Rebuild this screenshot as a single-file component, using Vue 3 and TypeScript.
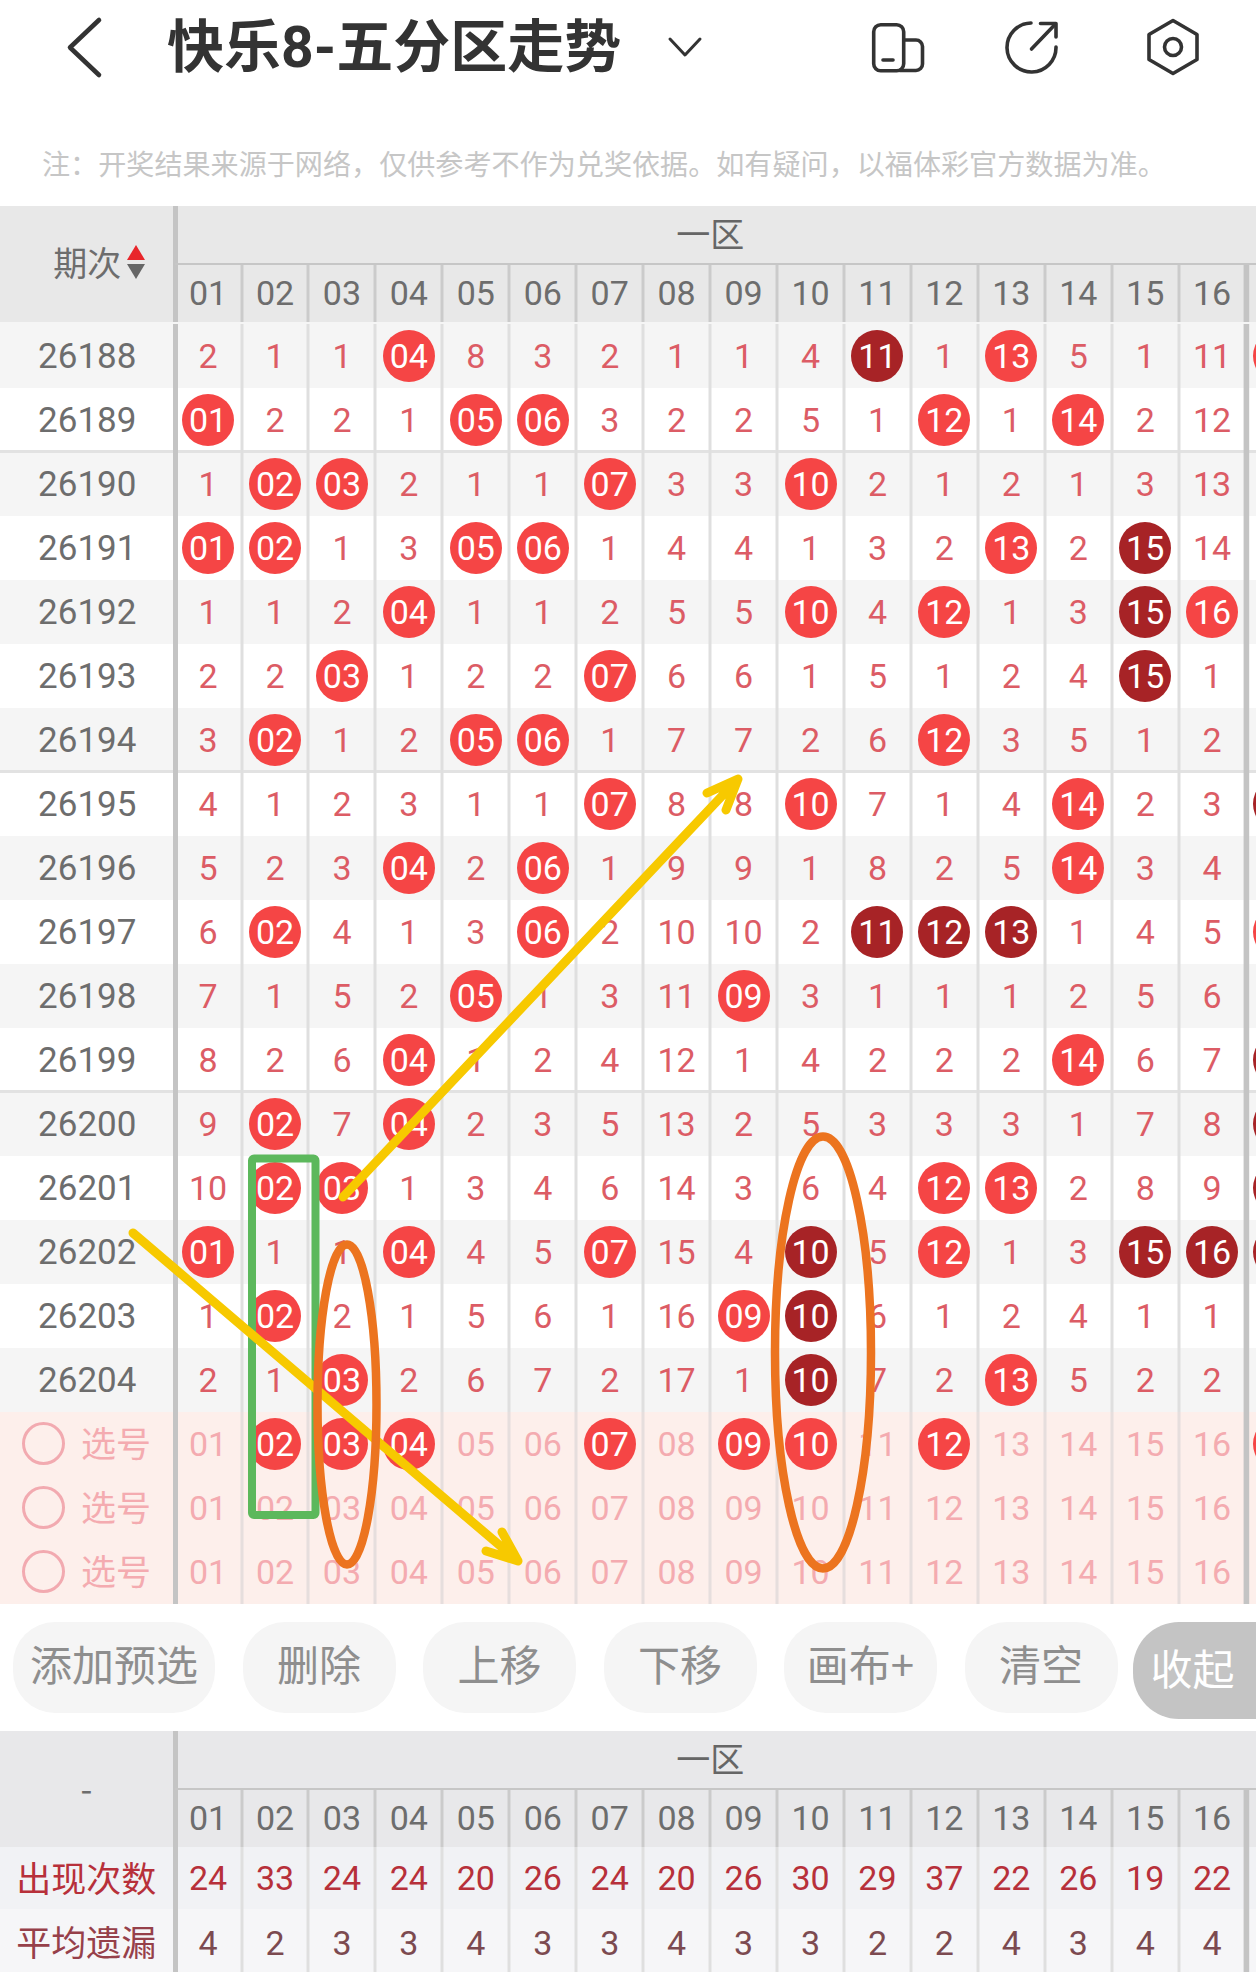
<script setup lang="ts">
interface Cell { text: string; kind: 'plain' | 'red' | 'dark' }

const cols: string[] = Array.from({ length: 16 }, (_, i) => String(i + 1).padStart(2, '0'))

function parse(line: string): Cell[] {
  return line.split(' ').map((t) => {
    if (t[0] === 'R') return { text: t.slice(1), kind: 'red' as const }
    if (t[0] === 'D') return { text: t.slice(1), kind: 'dark' as const }
    return { text: t, kind: 'plain' as const }
  })
}

const raw: [string, string, string][] = [
  ['26188', '2 1 1 R04 8 3 2 1 1 4 D11 1 R13 5 1 11', 'red'],
  ['26189', 'R01 2 2 1 R05 R06 3 2 2 5 1 R12 1 R14 2 12', ''],
  ['26190', '1 R02 R03 2 1 1 R07 3 3 R10 2 1 2 1 3 13', ''],
  ['26191', 'R01 R02 1 3 R05 R06 1 4 4 1 3 2 R13 2 D15 14', ''],
  ['26192', '1 1 2 R04 1 1 2 5 5 R10 4 R12 1 3 D15 R16', ''],
  ['26193', '2 2 R03 1 2 2 R07 6 6 1 5 1 2 4 D15 1', ''],
  ['26194', '3 R02 1 2 R05 R06 1 7 7 2 6 R12 3 5 1 2', ''],
  ['26195', '4 1 2 3 1 1 R07 8 8 R10 7 1 4 R14 2 3', 'dark'],
  ['26196', '5 2 3 R04 2 R06 1 9 9 1 8 2 5 R14 3 4', ''],
  ['26197', '6 R02 4 1 3 R06 2 10 10 2 D11 D12 D13 1 4 5', 'red'],
  ['26198', '7 1 5 2 R05 1 3 11 R09 3 1 1 1 2 5 6', ''],
  ['26199', '8 2 6 R04 1 2 4 12 1 4 2 2 2 R14 6 7', 'dark'],
  ['26200', '9 R02 7 R04 2 3 5 13 2 5 3 3 3 1 7 8', 'dark'],
  ['26201', '10 R02 R03 1 3 4 6 14 3 6 4 R12 R13 2 8 9', 'dark'],
  ['26202', 'R01 1 1 R04 4 5 R07 15 4 D10 5 R12 1 3 D15 D16', 'dark'],
  ['26203', '1 R02 2 1 5 6 1 16 R09 D10 6 1 2 4 1 1', ''],
  ['26204', '2 1 R03 2 6 7 2 17 1 D10 7 2 R13 5 2 2', ''],
]

const sepAfter = ['26189', '26194', '26199']
const rows = raw.map(([id, line, extra], i) => ({
  id,
  cells: parse(line),
  extra,
  grey: i % 2 === 0,
  sep: sepAfter.includes(id),
}))

const picks = [
  { cells: parse('01 R02 R03 R04 05 06 R07 08 R09 R10 11 R12 13 14 15 16'), extra: 'red' },
  { cells: parse(cols.join(' ')), extra: '' },
  { cells: parse(cols.join(' ')), extra: '' },
]

const stats = [
  { label: '出现次数', cls: 'count', values: '24 33 24 24 20 26 24 20 26 30 29 37 22 26 19 22'.split(' ') },
  { label: '平均遗漏', cls: 'miss', values: '4 2 3 3 4 3 3 4 3 3 2 2 4 3 4 4'.split(' ') },
]

const buttons = ['添加预选', '删除', '上移', '下移', '画布+', '清空']
</script>

<template>
  <div class="page">
    <header class="topbar">
      <svg class="back" viewBox="64 14 40 64" width="40" height="64" aria-hidden="true">
        <path d="M99 19 L70 46.5 L99 74" />
      </svg>
      <h1 class="title">快乐8-五分区走势</h1>
      <svg class="caret" viewBox="667 34 36 24" width="36" height="24" aria-hidden="true">
        <path d="M670 38 L685 54 L700 38" />
      </svg>
      <div class="actions">
        <svg viewBox="868 17 60 60" width="60" height="60" aria-hidden="true">
          <rect x="873.7" y="24.7" width="30" height="46" rx="7" />
          <path d="M904 40 H916 a6.5 6.5 0 0 1 6.5 6.5 V64 a6.5 6.5 0 0 1 -6.5 6.5 H900" />
          <path d="M883 60 H893" />
        </svg>
        <svg viewBox="1001 17 60 60" width="60" height="60" aria-hidden="true">
          <path d="M1031 23 A24.5 24.5 0 1 0 1056 47" />
          <path d="M1031.5 49 L1055 24.5" />
          <path d="M1040.5 23.5 H1056 V37" />
        </svg>
        <svg viewBox="1143 17 60 60" width="60" height="60" aria-hidden="true">
          <path d="M1173 20.5 L1197 34.5 V59.5 L1173 73.5 L1149 59.5 V34.5 Z" />
          <circle cx="1173" cy="47" r="8.5" />
        </svg>
      </div>
    </header>

    <p class="note">注：开奖结果来源于网络，仅供参考不作为兑奖依据。如有疑问，以福体彩官方数据为准。</p>

    <section class="head">
      <div class="label head-label period">
        <span>期次</span>
        <span class="sort"><i class="up"></i><i class="down"></i></span>
      </div>
      <div class="head-main">
        <div class="zone">一区</div>
        <div class="zone-nums">
          <div v-for="c in cols" :key="c" class="cell">{{ c }}</div>
          <div class="cell tail"></div>
        </div>
      </div>
    </section>

    <section class="body">
      <div v-for="r in rows" :key="r.id" class="row" :class="{ grey: r.grey, sep: r.sep }">
        <div class="label num">{{ r.id }}</div>
        <div v-for="(c, i) in r.cells" :key="i" class="cell">
          <span v-if="c.kind !== 'plain'" class="ball" :class="c.kind">{{ c.text }}</span>
          <template v-else>{{ c.text }}</template>
        </div>
        <div class="cell tail"><span v-if="r.extra" class="ball" :class="r.extra"></span></div>
      </div>

      <div v-for="(p, n) in picks" :key="n" class="row pick">
        <div class="label pick-label"><span class="radio"></span><span class="pick-text">选号</span></div>
        <div v-for="(c, i) in p.cells" :key="i" class="cell">
          <span v-if="c.kind !== 'plain'" class="ball" :class="c.kind">{{ c.text }}</span>
          <template v-else>{{ c.text }}</template>
        </div>
        <div class="cell tail"><span v-if="p.extra" class="ball" :class="p.extra"></span></div>
      </div>
    </section>

    <nav class="tools">
      <button v-for="b in buttons" :key="b" class="tool" type="button">{{ b }}</button>
      <button class="tool fold" type="button">收起</button>
    </nav>

    <section class="head summary">
      <div class="label head-label">-</div>
      <div class="head-main">
        <div class="zone">一区</div>
        <div class="zone-nums">
          <div v-for="c in cols" :key="c" class="cell">{{ c }}</div>
          <div class="cell tail"></div>
        </div>
      </div>
    </section>
    <section class="stats">
      <div v-for="s in stats" :key="s.label" class="row" :class="s.cls">
        <div class="label">{{ s.label }}</div>
        <div v-for="(v, i) in s.values" :key="i" class="cell">{{ v }}</div>
        <div class="cell tail"></div>
      </div>
    </section>

    <svg class="marks" viewBox="0 0 1256 1972" width="1256" height="1972" aria-hidden="true">
      <rect class="green" x="252" y="1158.5" width="63.5" height="356.5" rx="2" />
      <g class="yellow">
        <path d="M343 1197 L738 779 M707 793 L738 779 L726 810" />
        <path d="M133 1233 L518 1561 M502 1532 L518 1561 L486 1551" />
      </g>
      <ellipse class="orange" cx="347" cy="1404.5" rx="29.5" ry="160" />
      <ellipse class="orange" cx="823" cy="1352.5" rx="48" ry="216" />
    </svg>
  </div>
</template>

<style>
html, body { margin: 0; background: #fff; }
</style>

<style scoped>
.page {
  position: relative;
  width: 1256px;
  height: 1972px;
  overflow: hidden;
  background: #fff;
  font-family: Roboto, "Noto Sans CJK SC", sans-serif;
  font-size: 34px;
  color: #6d6d6d;
}

.topbar {
  display: flex;
  align-items: center;
  height: 94px;
  padding: 0 53px 0 64px;
  box-sizing: border-box;
}
.topbar svg { fill: none; stroke: #333; stroke-width: 3.6; stroke-linecap: round; stroke-linejoin: round; display: block; }
.topbar .back { stroke-width: 4.6; }
.topbar .caret { stroke-width: 3; margin-left: 46px; }
.title {
  margin: 0 0 0 63px;
  width: 454px;
  font: 700 57px/1 Roboto, "Noto Sans CJK SC", sans-serif;
  color: #333;
  white-space: nowrap;
}
.actions { margin-left: auto; display: flex; gap: 73px; }
.actions svg + svg + svg { margin-left: 9px; }

.note {
  margin: 0;
  padding: 49px 0 23px 42px;
  height: 40px;
  font: 400 28.1px/40px "Noto Sans CJK SC", sans-serif;
  color: #c6c6c6;
  white-space: nowrap;
}

.label {
  flex: 0 0 174.6px;
  width: 174.6px;
  box-sizing: border-box;
  border-right: 2px solid #c4c4c4;
  display: flex;
  align-items: center;
  justify-content: center;
}
.label.num { font-size: 35px; padding: 2px 0 0 2px; }
.cell {
  flex: 0 0 66.95px;
  width: 66.95px;
  box-sizing: border-box;
  display: flex;
  align-items: center;
  justify-content: center;
  box-shadow: inset 1.5px 0 0 #dfdfdf, inset -1.5px 0 0 #dfdfdf;
  color: #dc5c65;
}
.cell:nth-child(2) { box-shadow: inset 3px 0 0 #c4c4c4, inset -1.5px 0 0 #dfdfdf; }
.cell:nth-last-child(2) { box-shadow: inset 1.5px 0 0 #dfdfdf, inset -2.4px 0 0 #c4c4c4; }
.cell.tail { box-shadow: inset 3.2px 0 0 #c4c4c4; }

.head {
  display: flex;
  height: 116.3px;
  background: #e8e8e8;
}
.head-label { font-family: "Noto Sans CJK SC", sans-serif; padding-bottom: 4px; }
.period { gap: 6px; padding: 0 0 6px 26px; }
.head-main { flex: 1 0 0; min-width: 0; display: flex; flex-direction: column; }
.zone {
  height: 57px;
  width: 1071.2px;
  line-height: 53px;
  text-align: center;
  font-family: "Noto Sans CJK SC", sans-serif;
  color: #666;
  box-shadow: inset 3px 0 0 #c4c4c4;
}
.zone-nums {
  flex: 1;
  display: flex;
  border-top: 2.6px solid #c6c6c6;
  width: 1138.2px;
}
.zone-nums .cell {
  color: #6d6d6d;
  padding-bottom: 1px;
  box-shadow: inset 1.5px 0 0 #cbcbcb, inset -1.5px 0 0 #cbcbcb;
}
.zone-nums .cell:first-child { box-shadow: inset 3px 0 0 #c4c4c4, inset -1.5px 0 0 #cbcbcb; }
.zone-nums .cell:nth-last-child(2) { box-shadow: inset 1.5px 0 0 #cbcbcb, inset -2.4px 0 0 #c4c4c4; }
.zone-nums .cell.tail { box-shadow: inset 3.2px 0 0 #c4c4c4; }

.sort { display: flex; flex-direction: column; gap: 4px; padding-top: 2px; }
.sort i { display: block; width: 0; height: 0; border-left: 9px solid transparent; border-right: 9px solid transparent; }
.sort .up { border-bottom: 15px solid #e8262b; }
.sort .down { border-top: 15px solid #666; }

.row {
  display: flex;
  height: 64px;
  width: 1312px;
  box-sizing: border-box;
  background-repeat: no-repeat;
  background-position: left bottom;
}
.body .row:first-child { height: 65.4px; padding-top: 1.4px; }
.row.grey { background-color: #f5f5f5; }
.row.sep {
  background-image: linear-gradient(#e2e2e2, #e2e2e2);
  background-size: 100% 2px;
}
.row.sep + .row {
  background-image: linear-gradient(#e2e2e2, #e2e2e2);
  background-size: 100% 1px;
  background-position: left top;
}

.ball {
  width: 52px;
  height: 52px;
  border-radius: 50%;
  display: flex;
  align-items: center;
  justify-content: center;
  color: #fff;
  flex: none;
}
.ball.red { background: #f54545; }
.ball.dark { background: #a72326; }

.row.pick { background-color: #fdefeb; }
.pick .cell { color: #f4abb0; box-shadow: inset 1.5px 0 0 #e6dedd, inset -1.5px 0 0 #e6dedd; }
.pick .cell:nth-child(2) { box-shadow: inset 3px 0 0 #c4c4c4, inset -1.5px 0 0 #e6dedd; }
.pick .cell:nth-last-child(2) { box-shadow: inset 1.5px 0 0 #e6dedd, inset -2.4px 0 0 #c4c4c4; }
.pick .cell.tail { box-shadow: inset 3.2px 0 0 #c4c4c4; }
.pick-label {
  justify-content: flex-start;
  padding-left: 22px;
  gap: 16px;
  color: #f4abb0;
  font-family: "Noto Sans CJK SC", sans-serif;
  font-size: 35px;
}
.pick-text { padding-bottom: 5px; }
.radio {
  width: 43px;
  height: 43px;
  box-sizing: border-box;
  border: 3px solid #f2aab0;
  border-radius: 50%;
  flex: none;
}

.tools {
  display: flex;
  align-items: flex-start;
  gap: 27.5px;
  height: 127.7px;
  padding: 18px 0 0 13px;
  box-sizing: border-box;
}
.tool {
  flex: 0 0 153px;
  height: 91px;
  padding: 0 0 9px;
  border: 0;
  border-radius: 42px;
  background: #f5f5f5;
  color: #8e8e8e;
  font: 400 42px/1 "Noto Sans CJK SC", sans-serif;
  white-space: nowrap;
}
.tool:first-child { flex-basis: 202px; }
.fold {
  flex-basis: 160px;
  height: 97px;
  margin-left: -12.5px;
  padding: 0 40px 6px 0;
  background: #c4c4c4;
  color: #fff;
  border-radius: 46px 0 0 46px;
}

.summary { background: #e8e8ea; height: 116px; }
.summary .head-label { padding-bottom: 3px; }
.stats .row { height: 62px; background: #f1f2f5; }
.stats .row.miss { height: 68px; background: #f6f6f8; }
.stats .label { font-family: "Noto Sans CJK SC", sans-serif; font-size: 35px; padding-bottom: 3px; }
.stats .count .label, .stats .count .cell { color: #b7303a; }
.stats .miss .label { color: #96404a; padding-bottom: 6px; }
.stats .miss .cell { color: #7c4a50; }

.marks { position: absolute; left: 0; top: 0; pointer-events: none; }
.green { fill: none; stroke: #5cb85c; stroke-width: 8; }
.yellow path { fill: none; stroke: #f7c900; stroke-width: 9; stroke-linecap: round; stroke-linejoin: round; }
.orange { fill: none; stroke: #ec741f; stroke-width: 8.5; }
</style>
